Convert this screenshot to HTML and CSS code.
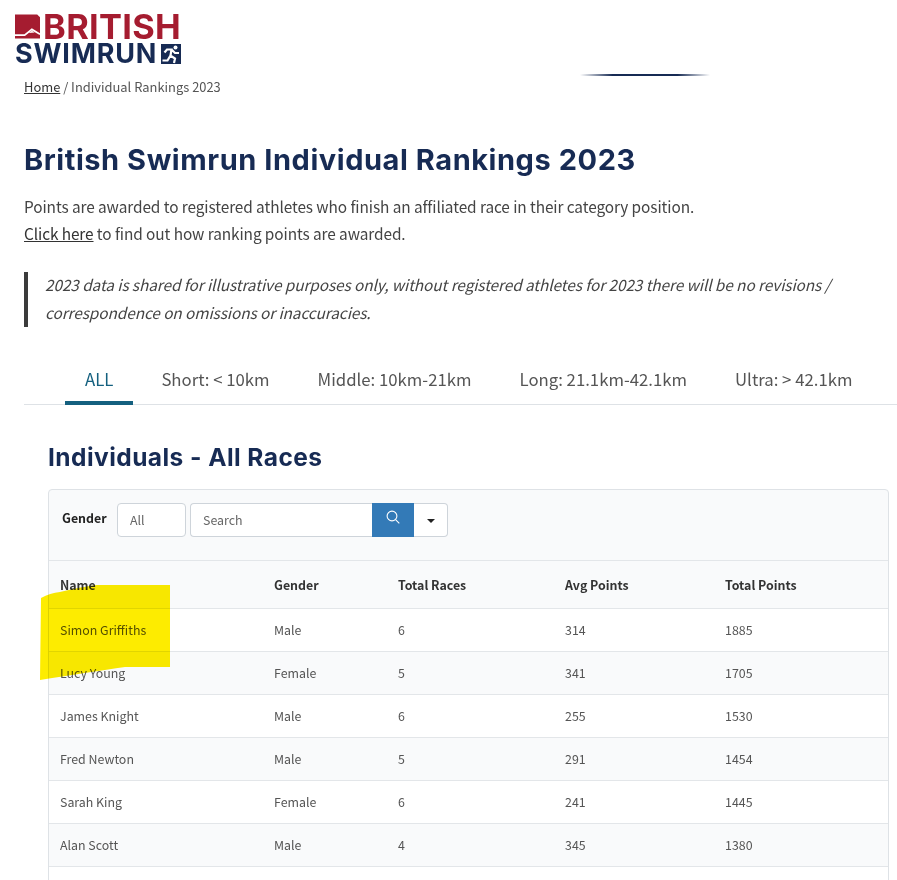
FILE: index.html
```html
<!DOCTYPE html>
<html lang="en">
<head>
<meta charset="utf-8">
<title>British Swimrun Individual Rankings 2023</title>
<link rel="stylesheet" href="styles.css">
</head>
<body>
<header class="site-header">
  <div class="logo">
    <div class="logo-top">
      <svg class="logo-swim" width="26" height="25" viewBox="0 0 26 25"><path fill="#a51c30" d="M0 0H23L26 3V25H0Z"/><path fill="none" stroke="#fff" stroke-width="1.8" d="M0 21.5H10L17.5 15.5L26 20.5"/><path fill="#fff" d="M14 19.2L17.5 16.8L20.5 18.8Z"/></svg>
      <span class="logo-british">BRITISH</span>
    </div>
    <div class="logo-bottom">
      <span class="logo-swimrun">SWIMRUN</span>
      <svg class="logo-run" width="20" height="20" viewBox="0 0 20 20"><rect width="20" height="20" fill="#172b54"/><path fill="none" stroke="#fff" stroke-width="2.2" d="M1.5 16.5H6.5L9.5 11.5L14 14.5L13 19M9.5 11.5L10.5 5.5H6L3.5 8.5M10.5 5.5L14 9H18"/><circle cx="14.5" cy="3.4" r="2" fill="#fff"/></svg>
    </div>
  </div>
  <div class="nav-shadow"></div>
</header>
<main class="content">
  <nav class="breadcrumb"><a href="#">Home</a> / Individual Rankings 2023</nav>
  <h1>British Swimrun Individual Rankings 2023</h1>
  <p class="intro">Points are awarded to registered athletes who finish an affiliated race in their category position.<br><a href="#">Click here</a> to find out how ranking points are awarded.</p>
  <blockquote><p>2023 data is shared for illustrative purposes only, without registered athletes for 2023 there will be no revisions / correspondence on omissions or inaccuracies.</p></blockquote>
  <ul class="tabs">
    <li class="tab active">ALL</li>
    <li class="tab">Short: &lt; 10km</li>
    <li class="tab">Middle: 10km-21km</li>
    <li class="tab">Long: 21.1km-42.1km</li>
    <li class="tab">Ultra: &gt; 42.1km</li>
  </ul>
  <section class="panel">
    <h2>Individuals - All Races</h2>
    <div class="card">
      <div class="toolbar">
        <label class="filter-label">Gender</label>
        <div class="select">All</div>
        <div class="search-group">
          <div class="search-input">Search</div>
          <button class="search-btn" type="button"><svg width="14" height="14" viewBox="0 0 14 14" fill="none" stroke="#fff" stroke-width="1.1"><circle cx="6" cy="6" r="4.9"/><path d="M9.6 9.6L13.3 13.3"/></svg></button>
        </div>
        <button class="caret-btn" type="button"><span class="caret"></span></button>
      </div>
      <table>
        <thead>
          <tr><th class="c1">Name</th><th class="c2">Gender</th><th class="c3">Total Races</th><th class="c4">Avg Points</th><th>Total Points</th></tr>
        </thead>
        <tbody>
          <tr><td class="name">Simon Griffiths</td><td>Male</td><td>6</td><td>314</td><td>1885</td></tr>
          <tr class="alt"><td class="name">Lucy Young</td><td>Female</td><td>5</td><td>341</td><td>1705</td></tr>
          <tr><td class="name">James Knight</td><td>Male</td><td>6</td><td>255</td><td>1530</td></tr>
          <tr class="alt"><td class="name">Fred Newton</td><td>Male</td><td>5</td><td>291</td><td>1454</td></tr>
          <tr><td class="name">Sarah King</td><td>Female</td><td>6</td><td>241</td><td>1445</td></tr>
          <tr class="alt"><td class="name">Alan Scott</td><td>Male</td><td>4</td><td>345</td><td>1380</td></tr>
          <tr><td>&nbsp;</td><td></td><td></td><td></td><td></td></tr>
        </tbody>
      </table>
    </div>
  </section>
</main>
<svg class="highlight" width="130" height="96" viewBox="0 0 130 96"><path fill="#fdec00" d="M1 13Q10 8 20 7Q40 2 57 0H130V82H85Q50 87 0 95Z"/></svg>
</body>
</html>
```
FILE: styles.css
```css
* { box-sizing: border-box; }
html, body { margin: 0; height: 880px; overflow: hidden; }
body {
  position: relative;
  background: #fff;
  color: #444;
  font-family: "Noto Sans CJK JP", "Source Sans Pro", sans-serif;
  font-size: 14px;
}
a { color: #333; text-decoration: underline; }

.site-header { height: 78px; position: relative; padding: 14px 0 0 15px; }
.logo { width: 166px; }
.logo-top { display: flex; align-items: flex-end; gap: 3px; height: 25px; }
.logo-british {
  font-family: Inter, sans-serif;
  font-weight: 700;
  font-size: 34.4px;
  line-height: 25px;
  letter-spacing: 0.3px;
  color: #a51c30;
}
.logo-bottom { display: flex; align-items: center; justify-content: space-between; height: 20px; margin-top: 5px; }
.logo-swimrun {
  font-family: Inter, sans-serif;
  font-weight: 700;
  font-size: 27px;
  line-height: 20px;
  letter-spacing: 0.8px;
  color: #172b54;
}
.nav-shadow {
  position: absolute;
  left: 580px;
  top: 74px;
  width: 130px;
  height: 2px;
  background: linear-gradient(90deg, rgba(23,43,84,0), #172b54 25%, #172b54 75%, rgba(23,43,84,0));
}

.content { padding: 0 0 0 24px; }
.breadcrumb { font-size: 12.9px; line-height: 18px; color: #555; }
h1 {
  margin: 46px 0 0;
  font-family: Inter, sans-serif;
  font-weight: 700;
  font-size: 29px;
  line-height: 36px;
  letter-spacing: 0.55px;
  color: #172b54;
}
.intro { margin: 15px 0 0; font-size: 15.4px; letter-spacing: -0.09px; line-height: 27px; color: #444; }
blockquote {
  display: flow-root;
  margin: 25px 0 0;
  padding: 0 40px 0 17px;
  border-left: 4px solid #3b3b3b;
  height: 55px;
}
blockquote p {
  margin: -2px 0 0;
  font-size: 15.4px;
  letter-spacing: -0.09px;
  line-height: 28px;
  font-style: italic;
  color: #444;
}
.tabs {
  list-style: none;
  display: flex;
  gap: 8px;
  margin: 29px 0 0;
  padding: 0 0 0 41px;
  height: 49px;
  border-bottom: 1px solid #dee2e6;
}
.tab { padding: 0 20px; font-size: 16.75px; line-height: 46px; color: #555; white-space: nowrap; }
.tab.active { color: #14607f; height: 49px; border-bottom: 4px solid #14607f; }

.panel { padding: 0 8px 0 24px; }
h2 {
  margin: 34px 0 0;
  font-family: Inter, sans-serif;
  font-weight: 700;
  font-size: 24.5px;
  line-height: 36px;
  letter-spacing: 0.45px;
  color: #172b54;
}
.card {
  margin-top: 14px;
  border: 1px solid #dee2e6;
  border-radius: 4px;
  background: #f9fafb;
}
.toolbar { display: flex; align-items: flex-start; height: 71px; padding: 13px 0 0 13px; border-bottom: 1px solid #e3e6e9; }
.filter-label { font-weight: 700; font-size: 12.4px; line-height: 30px; color: #222; width: 55px; }
.select, .search-input {
  height: 34px;
  background: #fff;
  border: 1px solid #ced4da;
  font-size: 12.4px;
  line-height: 32px;
  color: #666;
  padding-left: 12px;
}
.select { width: 69px; border-radius: 4px; margin-right: 4px; }
.search-group { display: flex; width: 224px; }
.search-input { flex: 1; border-right: 0; border-radius: 4px 0 0 4px; }
.search-btn { width: 42px; height: 34px; padding: 0 0 4px; border: 0; background: #337ab7; }
.caret-btn { width: 34px; height: 34px; padding: 0; background: #fff; border: 1px solid #ced4da; border-left: 0; border-radius: 0 4px 4px 0; }
.caret { display: inline-block; border: 4px solid transparent; border-top-color: #222; border-bottom-width: 0; vertical-align: middle; }

table { width: 100%; border-collapse: collapse; table-layout: fixed; font-size: 12.4px; color: #555; }
th { height: 47px; text-align: left; font-weight: 700; color: #333; padding: 2px 0 0 10px; border-bottom: 1px solid #e3e6e9; }
td { height: 43px; padding: 0 0 0 10px; border-bottom: 1px solid #e3e6e9; background: #fff; }
.alt td { background: #f9fafb; }
.c1, .name { padding-left: 11px; }
.c1 { width: 215px; }
.c2 { width: 124px; }
.c3 { width: 167px; }
.c4 { width: 160px; }

.highlight { position: absolute; left: 40px; top: 585px; mix-blend-mode: multiply; }
```
